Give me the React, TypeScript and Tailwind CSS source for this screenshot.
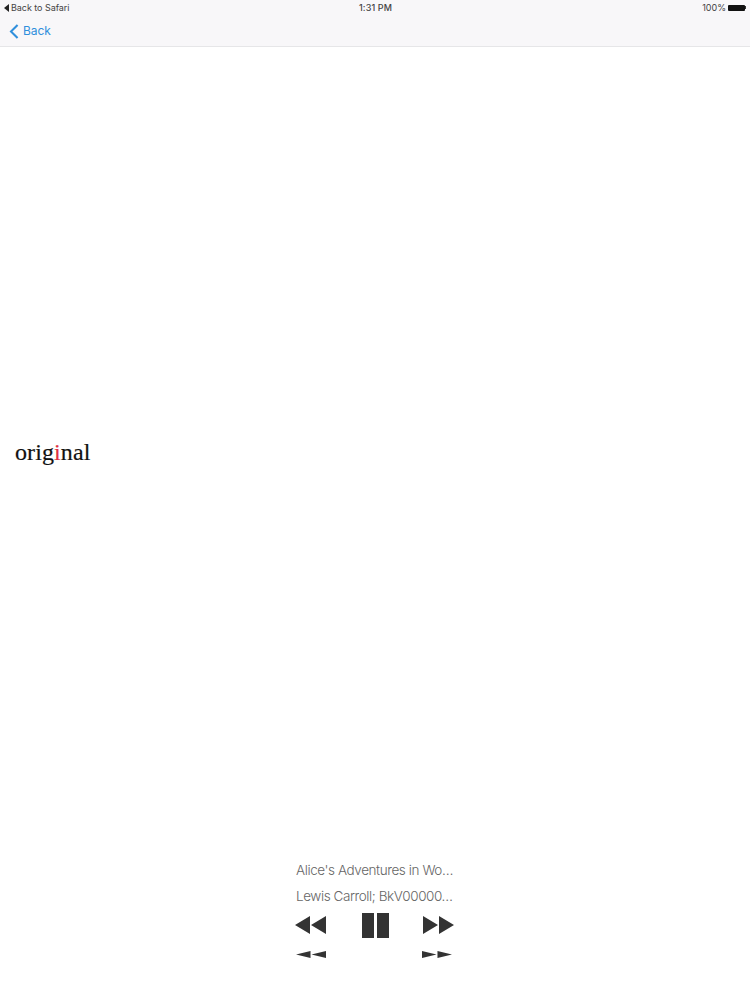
const SANS = "font-['Inter','Liberation_Sans',sans-serif]";

function DoubleArrow({ dir, className }: { dir: "left" | "right"; className: string }) {
  const d = dir === "left" ? "M15 0V18L0 9ZM31 0V18L16 9Z" : "M0 0V18L15 9ZM16 0V18L31 9Z";
  return (
    <svg viewBox="0 0 31 18" preserveAspectRatio="none" className={className} fill="#333333">
      <path d={d} />
    </svg>
  );
}

export default function App() {
  return (
    <div className={`flex h-[1000px] w-[750px] flex-col bg-white ${SANS}`}>
      <header className="h-[47px] shrink-0 border-b border-[#e6e6e8] bg-[#f8f7f9]">
        <div className="grid h-[15px] grid-cols-3 items-center pl-[4px] pr-[4px] text-[9px] text-[#444444]">
          <div className="flex items-center gap-[2px]">
            <svg viewBox="0 0 5 8" className="h-[8px] w-[5px]" fill="#222222">
              <path d="M5 0V8L0 4Z" />
            </svg>
            <span className="tracking-[-0.05px]">Back to Safari</span>
          </div>
          <div className="pl-[1px] text-center font-medium tracking-[0.1px]">1:31 PM</div>
          <div className="flex items-center justify-end gap-[2px]">
            <span>100%</span>
            <div className="flex items-center">
              <div className="h-[6px] w-[17px] rounded-[1px] bg-[#111111]" />
              <div className="h-[3px] w-[1px] bg-[#333333]" />
            </div>
          </div>
        </div>
        <div className="flex h-[32px] items-center gap-[4px] pl-[9px] text-[12px] tracking-[-0.1px] text-[#2f8fdc]">
          <svg viewBox="0 0 10 16" className="h-[15px] w-[10px]" fill="none" stroke="#2f8fdc" strokeWidth="2.2">
            <path d="M8.8 1L1.8 8L8.8 15" />
          </svg>
          <span>Back</span>
        </div>
      </header>

      <main className="flex flex-1 items-center pl-[15px]">
        <p className="font-['Liberation_Serif',serif] text-[24px] leading-none tracking-[0.1px] text-[#111111] [-webkit-text-stroke:0.2px_#111111]">
          orig<span className="text-[#e0303f] [-webkit-text-stroke:0.2px_#e0303f]">i</span>nal
        </p>
      </main>

      <footer className="flex h-[143px] shrink-0 flex-col items-center">
        <div className="flex w-[160px] flex-col text-[13.5px] font-light text-[#666666]">
          <div className="flex h-[26px] items-center whitespace-nowrap pl-[1px] tracking-[-0.42px]">Alice's Adventures in Wo…</div>
          <div className="flex h-[27px] items-center whitespace-nowrap pl-[1px] tracking-[-0.42px]">Lewis Carroll; BkV00000…</div>
          <div className="flex h-[29px] items-center justify-between pr-[1px]">
            <DoubleArrow dir="left" className="h-[18px] w-[31px]" />
            <div className="ml-[1px] mt-[2px] flex gap-[3px]">
              <div className="h-[25px] w-[12px] bg-[#333333]" />
              <div className="h-[25px] w-[12px] bg-[#333333]" />
            </div>
            <DoubleArrow dir="right" className="h-[18px] w-[31px]" />
          </div>
          <div className="mt-[12px] flex items-center justify-between pl-[1px] pr-[3px]">
            <DoubleArrow dir="left" className="h-[7px] w-[30px]" />
            <DoubleArrow dir="right" className="h-[7px] w-[30px]" />
          </div>
        </div>
      </footer>
    </div>
  );
}
